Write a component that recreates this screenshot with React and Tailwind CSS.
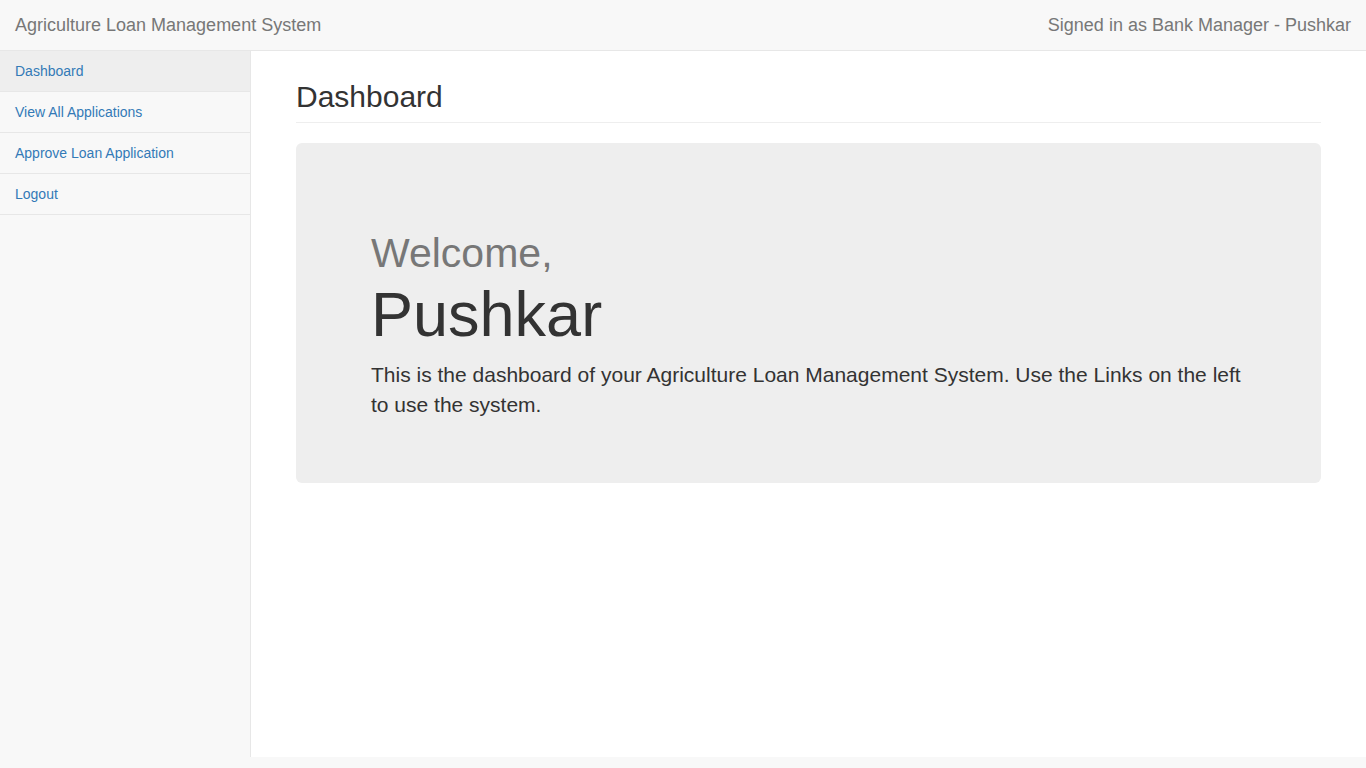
const links = ['Dashboard', 'View All Applications', 'Approve Loan Application', 'Logout'];

const App = () => {
  return (
    <div
      className="min-h-screen bg-[#f8f8f8] text-[#333] text-[14px]"
      style={{ fontFamily: '"Liberation Sans", Arial, sans-serif' }}
    >
      {/* top navbar */}
      <div className="h-[51px] border-b border-[#e7e7e7] bg-[#f8f8f8] flex items-center justify-between px-[15px]">
        <span className="text-[18px] leading-[20px] text-[#777]">Agriculture Loan Management System</span>
        <span className="text-[18px] leading-[20px] text-[#777]">Signed in as Bank Manager - Pushkar</span>
      </div>

      <div className="flex">
        {/* sidebar */}
        <div className="w-[250px] shrink-0">
          <ul>
            {links.map((l, i) => (
              <li key={l} className="border-b border-[#e7e7e7]">
                <a
                  href="#"
                  className={`block px-[15px] py-[10px] leading-[20px] text-[#337ab7] ${i === 0 ? 'bg-[#eee]' : ''}`}
                >
                  {l}
                </a>
              </li>
            ))}
          </ul>
        </div>

        {/* page wrapper */}
        <div className="flex-1 h-[706px] bg-white border-l border-[#e7e7e7] px-[45px]">
          <h1 className="mt-[29px] pb-[9px] border-b border-[#eee] text-[30px] leading-[33px] font-normal text-[#333]">
            Dashboard
          </h1>

          <div className="mt-[20px] bg-[#eee] rounded-[6px] px-[75px] pt-[68px] pb-[63px]">
            <h1 className="text-[63px] leading-[69.3px] font-normal text-[#333] mb-[10px]">
              <small className="text-[41px] leading-none text-[#777]">Welcome,</small>
              <br />
              Pushkar
            </h1>
            <p className="text-[21px] leading-[30px] font-extralight text-[#333]">
              This is the dashboard of your Agriculture Loan Management System. Use the Links on the left to use the system.
            </p>
          </div>
        </div>
      </div>
    </div>
  );
};

export default App;
